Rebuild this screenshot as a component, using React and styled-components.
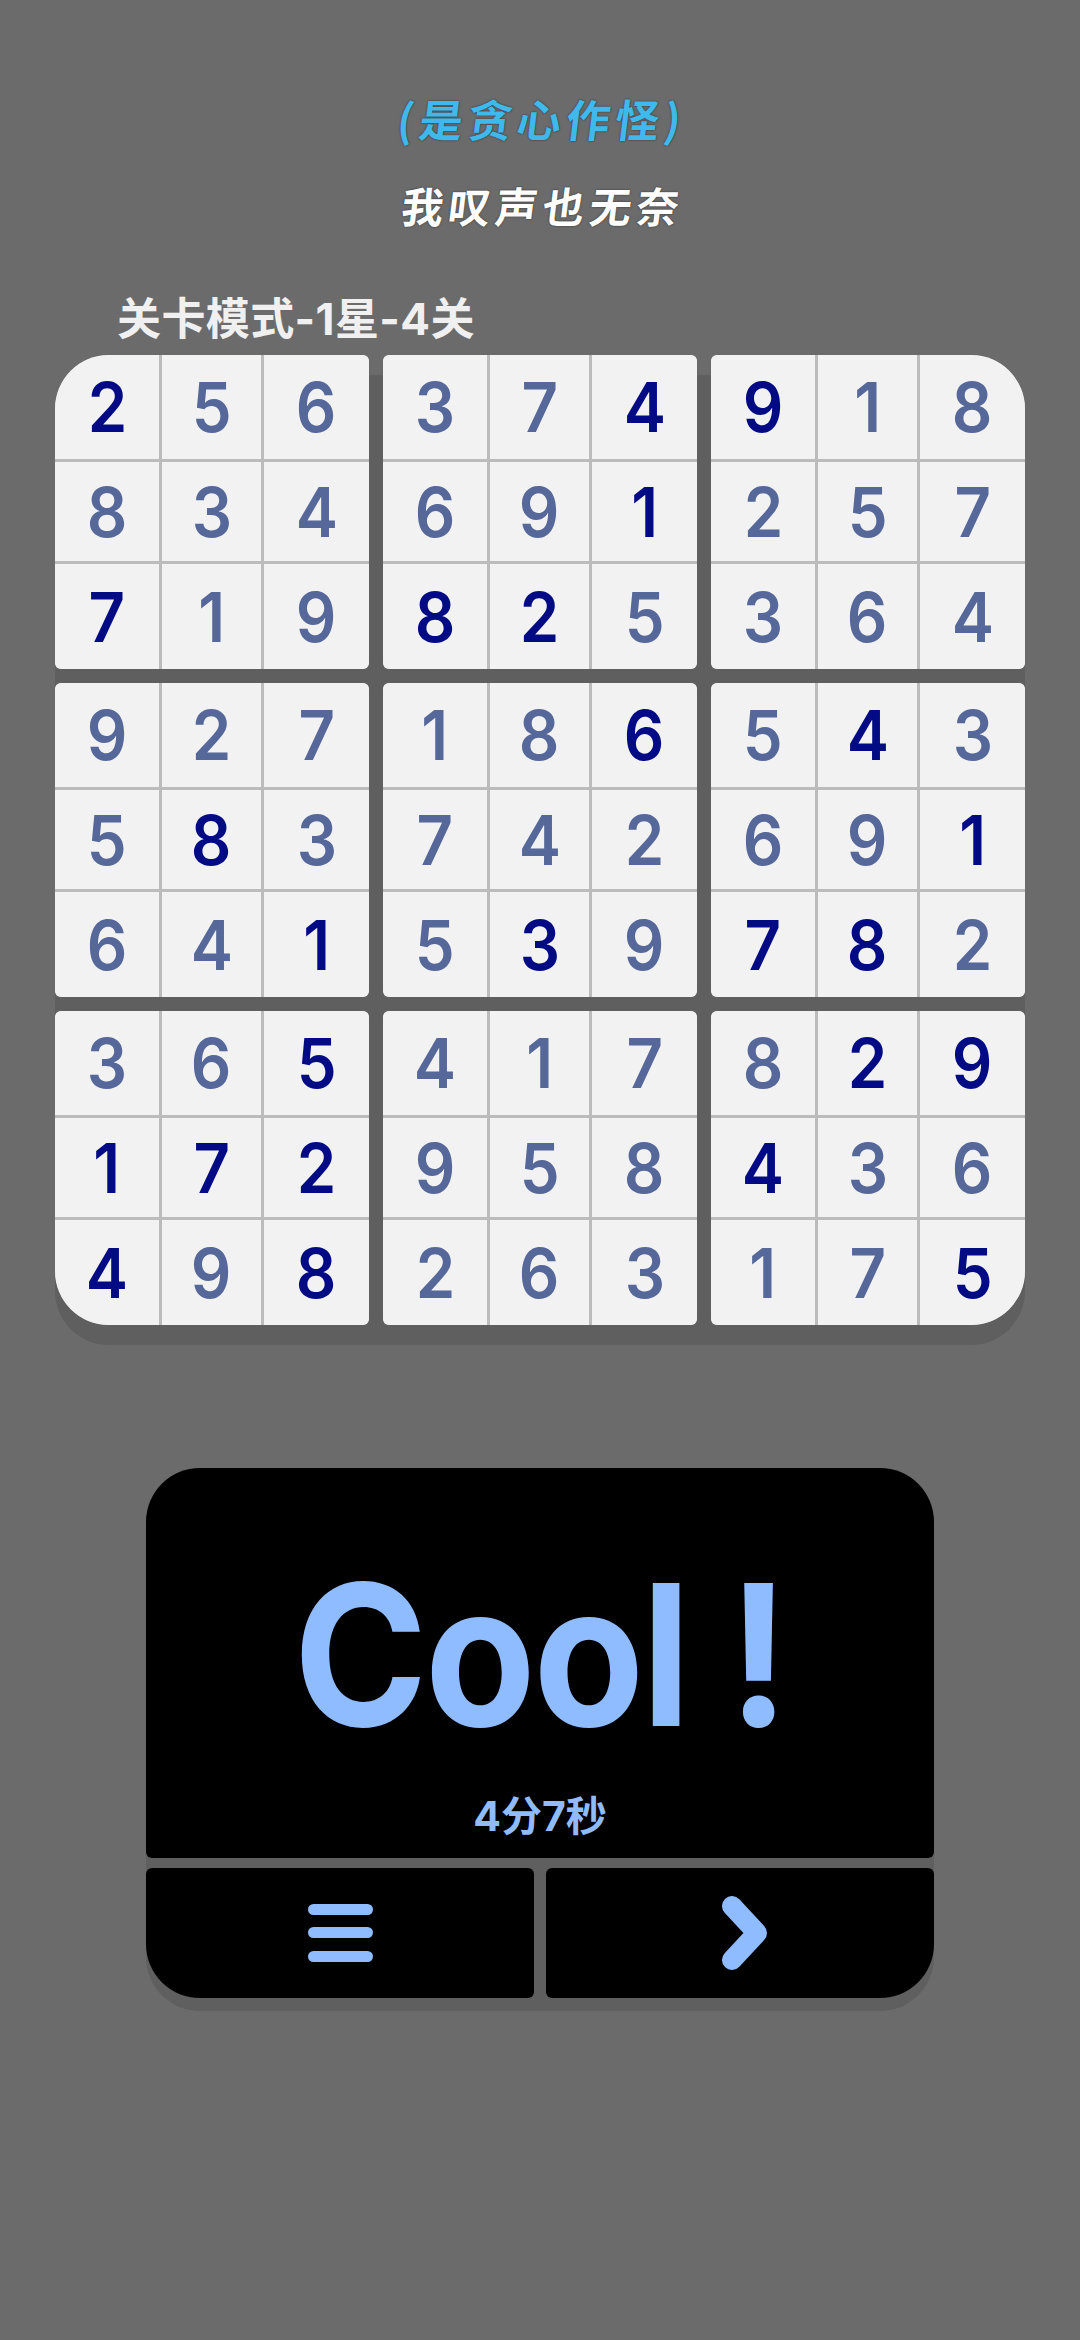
import React from "react";
import styled, { createGlobalStyle } from "styled-components";

const rows = [
  "256374918",
  "834691257",
  "719825364",
  "927186543",
  "583742691",
  "641539782",
  "365417829",
  "172958436",
  "498263175",
];

// cells that came with the puzzle, drawn darker: row -> columns
const given = {
  0: [0, 5, 6],
  1: [5],
  2: [0, 3, 4],
  3: [5, 7],
  4: [1, 8],
  5: [2, 4, 6, 7],
  6: [2, 7, 8],
  7: [0, 1, 2, 6],
  8: [0, 2, 8],
};

const blockRadius = (index) => {
  const r = ["6px", "6px", "6px", "6px"];
  if (index === 0) r[0] = "54px";
  if (index === 2) r[1] = "54px";
  if (index === 8) r[2] = "54px";
  if (index === 6) r[3] = "54px";
  return r.join(" ");
};

export default function App() {
  const blocks = Array.from({ length: 9 }, (_, index) => {
    const top = Math.floor(index / 3) * 3;
    const left = (index % 3) * 3;
    const cells = [];
    for (let r = top; r < top + 3; r++) {
      for (let c = left; c < left + 3; c++) {
        cells.push({ value: rows[r][c], given: given[r].includes(c), key: `${r}-${c}` });
      }
    }
    return { index, cells };
  });

  return (
    <Page>
      <GlobalStyle />
      <Lyric $first>(是贪心作怪)</Lyric>
      <Lyric>我叹声也无奈</Lyric>
      <LevelLabel>关卡模式-1星-4关</LevelLabel>
      <Board>
        {blocks.map((block) => (
          <Block key={block.index} $radius={blockRadius(block.index)}>
            {block.cells.map((cell) => (
              <Cell key={cell.key} $given={cell.given}>
                <Digit>{cell.value}</Digit>
              </Cell>
            ))}
          </Block>
        ))}
      </Board>
      <ResultPanel>
        <ResultMain>
          <CoolText>Cool !</CoolText>
          <TimeText>4分7秒</TimeText>
        </ResultMain>
        <ButtonRow>
          <ActionButton $left aria-label="menu">
            <svg width="65" height="58" viewBox="0 0 65 58" fill="#8fbbff">
              <rect x="0" y="0" width="65" height="11" rx="5.5" />
              <rect x="0" y="23" width="65" height="11" rx="5.5" />
              <rect x="0" y="47" width="65" height="11" rx="5.5" />
            </svg>
          </ActionButton>
          <ActionButton aria-label="next">
            <ChevronIcon width="46" height="74" viewBox="0 0 46 74" fill="none">
              <path
                d="M10 10 L35 37 L10 64"
                stroke="#8fbbff"
                strokeWidth="20"
                strokeLinecap="round"
                strokeLinejoin="round"
              />
            </ChevronIcon>
          </ActionButton>
        </ButtonRow>
      </ResultPanel>
    </Page>
  );
}

const GlobalStyle = createGlobalStyle`
  html, body {
    margin: 0;
    padding: 0;
    background: #6b6b6b;
  }
`;

const Page = styled.div`
  width: 1080px;
  height: 2340px;
  background: #6b6b6b;
  overflow: hidden;
  display: flex;
  flex-direction: column;
  font-family: "Inter", "Noto Sans CJK SC", sans-serif;
`;

const Lyric = styled.div`
  height: 60px;
  line-height: 60px;
  margin-top: ${(props) => (props.$first ? "88px" : "27px")};
  padding-left: ${(props) => (props.$first ? "4px" : "6px")};
  text-align: center;
  font-family: "Noto Sans CJK SC", sans-serif;
  font-size: ${(props) => (props.$first ? "44px" : "42px")};
  font-weight: 700;
  letter-spacing: 5px;
  color: ${(props) => (props.$first ? "#3fb9ec" : "#ffffff")};
  text-shadow: 0 0 2px #2a2a2a;
  transform: skewX(-7deg);
`;

const LevelLabel = styled.div`
  height: 60px;
  line-height: 60px;
  margin-top: 54px;
  margin-bottom: 6px;
  padding-left: 117px;
  font-family: "Inter", "Noto Sans CJK SC", sans-serif;
  font-size: 44px;
  font-weight: 700;
  letter-spacing: 0.4px;
  color: #f0f0f0;
`;

const Board = styled.div`
  position: relative;
  width: 970px;
  margin-left: 55px;
  display: grid;
  grid-template-columns: repeat(3, 314px);
  grid-auto-rows: 314px;
  gap: 14px;

  &::before {
    content: "";
    position: absolute;
    inset: 20px 0 -20px 0;
    border-radius: 54px;
    background: #5f5f5f;
  }
`;

const Block = styled.div`
  position: relative;
  display: grid;
  grid-template-columns: 104px 99px 105px;
  grid-template-rows: 104px 99px 105px;
  gap: 3px;
  background: #bcbcbc;
  border-radius: ${(props) => props.$radius};
  overflow: hidden;
`;

const Cell = styled.div`
  display: flex;
  align-items: center;
  justify-content: center;
  background: #f2f2f2;
  font-family: "Inter", sans-serif;
  font-size: 69px;
  font-weight: 600;
  color: ${(props) => (props.$given ? "#020b84" : "#56689a")};
`;

const Digit = styled.span`
  display: inline-block;
  transform: scaleX(0.92);
`;

const ResultPanel = styled.div`
  position: relative;
  width: 788px;
  margin: 143px 0 0 146px;
  display: flex;
  flex-direction: column;
  gap: 10px;

  &::before {
    content: "";
    position: absolute;
    inset: 13px 0 -13px 0;
    border-radius: 54px;
    background: #5f5f5f;
  }
`;

const ResultMain = styled.div`
  position: relative;
  height: 390px;
  background: #000000;
  border-radius: 54px 54px 6px 6px;
  display: flex;
  flex-direction: column;
  align-items: center;
`;

const CoolText = styled.div`
  margin-top: 62px;
  height: 250px;
  line-height: 250px;
  font-size: 197px;
  font-weight: 700;
  letter-spacing: -3px;
  color: #8fbbff;
  transform: scaleX(0.92);
`;

const TimeText = styled.div`
  margin-top: 11px;
  height: 50px;
  line-height: 50px;
  font-family: "Inter", "Noto Sans CJK SC", sans-serif;
  font-size: 41px;
  font-weight: 700;
  color: #8fbbff;
`;

const ButtonRow = styled.div`
  position: relative;
  display: grid;
  grid-template-columns: 388px 388px;
  gap: 12px;
  height: 130px;
`;

const ActionButton = styled.button`
  border: 0;
  padding: 0;
  background: #000000;
  border-radius: ${(props) => (props.$left ? "6px 6px 6px 54px" : "6px 6px 54px 6px")};
  display: flex;
  align-items: center;
  justify-content: center;
`;

const ChevronIcon = styled.svg`
  margin-left: 9px;
`;
